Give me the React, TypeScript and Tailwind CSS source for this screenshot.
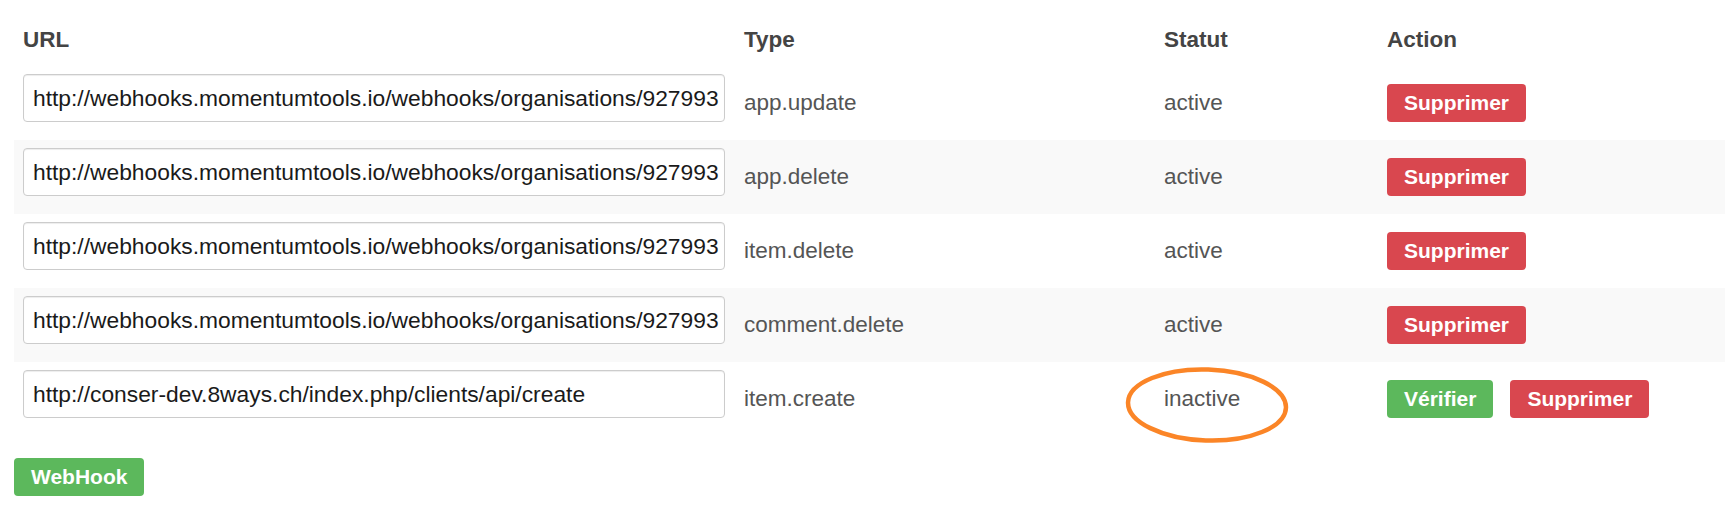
import React from 'react';

type Hook = { url: string; type: string; active: boolean };

const hooks: Hook[] = [
  { url: 'http://webhooks.momentumtools.io/webhooks/organisations/927993', type: 'app.update', active: true },
  { url: 'http://webhooks.momentumtools.io/webhooks/organisations/927993', type: 'app.delete', active: true },
  { url: 'http://webhooks.momentumtools.io/webhooks/organisations/927993', type: 'item.delete', active: true },
  { url: 'http://webhooks.momentumtools.io/webhooks/organisations/927993', type: 'comment.delete', active: true },
  { url: 'http://conser-dev.8ways.ch/index.php/clients/api/create', type: 'item.create', active: false },
];

const btn = 'h-[38px] px-[17px] rounded-[4px] text-white font-bold text-[21px] leading-[38px] whitespace-nowrap';

export default function App() {
  return (
    <div
      className="relative min-h-[521px] bg-white pt-4 pl-[14px] text-[22.5px]"
      style={{ fontFamily: '"Liberation Sans", Arial, sans-serif' }}
    >
      <table className="w-full table-fixed border-collapse">
        <colgroup>
          <col className="w-[721px]" />
          <col className="w-[420px]" />
          <col className="w-[223px]" />
          <col />
        </colgroup>
        <thead>
          <tr className="h-[50px] text-left text-[#444]">
            <th className="pl-[9px] pt-2 pb-[10px] align-top font-bold leading-[32px]">URL</th>
            <th className="pl-[9px] pt-2 pb-[10px] align-top font-bold leading-[32px]">Type</th>
            <th className="pl-[9px] pt-2 pb-[10px] align-top font-bold leading-[32px]">Statut</th>
            <th className="pl-[9px] pt-2 pb-[10px] align-top font-bold leading-[32px]">Action</th>
          </tr>
        </thead>
        <tbody>
          {hooks.map((h, i) => (
            <tr key={i} className={`h-[74px] ${i % 2 === 1 ? 'bg-[#f9f9f9]' : 'bg-white'}`}>
              <td className="pl-[9px] pt-2 align-top">
                <input
                  readOnly
                  value={h.url}
                  className="block h-[48px] w-[702px] rounded-[4px] border border-[#ccc] bg-white pl-[9px] text-[22.8px] text-[#1a1a1a] shadow-[inset_0_1px_1px_rgba(0,0,0,0.075)] outline-none"
                  style={{ fontFamily: '"Liberation Sans", Arial, sans-serif' }}
                />
              </td>
              <td className="pl-[9px] align-middle leading-[32px] text-[#555]">{h.type}</td>
              <td className="pl-[9px] align-middle leading-[32px] text-[#555]">{h.active ? 'active' : 'inactive'}</td>
              <td className="pl-[9px] align-middle">
                <div className="flex items-center gap-[17px]">
                  {!h.active && <button className={`${btn} bg-[#5cb85c]`}>Vérifier</button>}
                  <button className={`${btn} bg-[#d9474f]`}>Supprimer</button>
                </div>
              </td>
            </tr>
          ))}
        </tbody>
      </table>

      <button className={`${btn} mt-[22px] bg-[#5cb85c]`}>WebHook</button>

      {/* annotation circle */}
      <svg className="pointer-events-none absolute left-[1122px] top-[364px]" width="172" height="84" viewBox="0 0 172 84">
        <ellipse cx="85" cy="41" rx="79" ry="35.5" fill="none" stroke="#fb8527" strokeWidth="4.5" transform="rotate(2 85 41)" />
      </svg>
    </div>
  );
}
